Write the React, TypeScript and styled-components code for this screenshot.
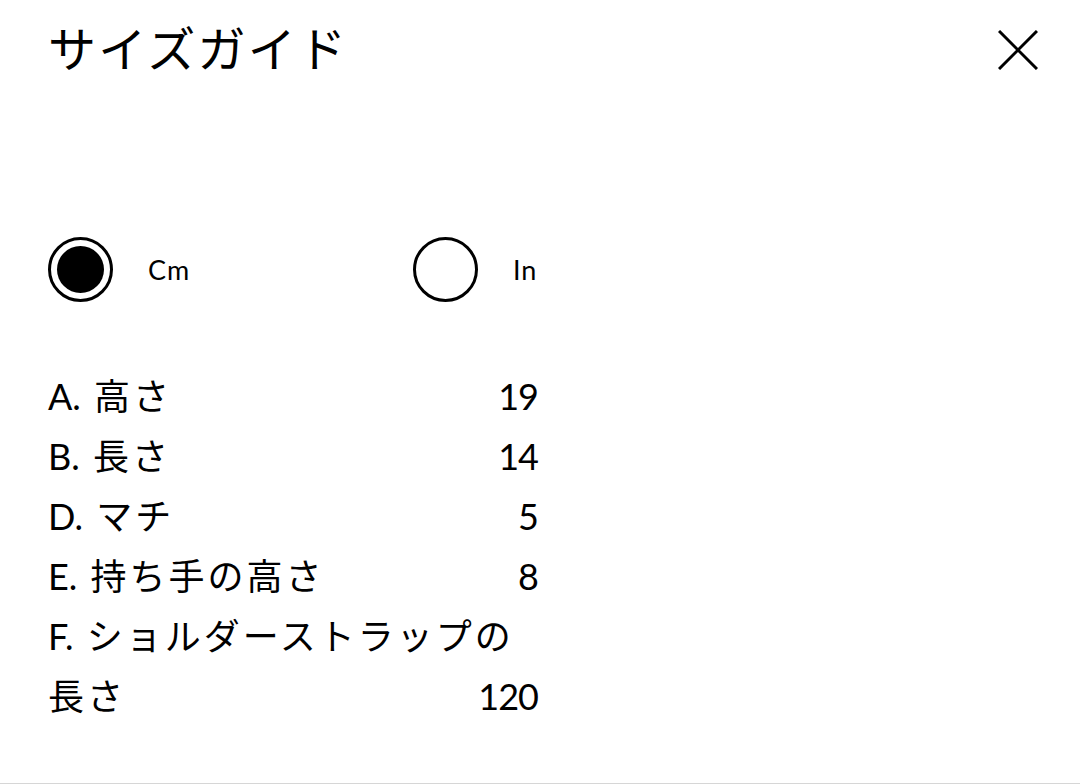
import React, { useState } from 'react';
import styled, { createGlobalStyle } from 'styled-components';

type Unit = 'cm' | 'in';

interface SizeRow {
  code: string;
  name: string;
  cm: number;
}

const rows: SizeRow[] = [
  { code: 'A.', name: '高さ', cm: 19 },
  { code: 'B.', name: '長さ', cm: 14 },
  { code: 'D.', name: 'マチ', cm: 5 },
  { code: 'E.', name: '持ち手の高さ', cm: 8 },
  { code: 'F.', name: 'ショルダーストラップの長さ', cm: 120 },
];

const toUnit = (cm: number, unit: Unit) =>
  unit === 'cm' ? String(cm) : (cm / 2.54).toFixed(1);

const App: React.FC = () => {
  const [unit, setUnit] = useState<Unit>('cm');

  return (
    <>
      <GlobalStyle />
      <Sheet>
        <Header>
          <Title>サイズガイド</Title>
          <CloseButton aria-label="閉じる">
            <svg width="40" height="40" viewBox="0 0 40 40">
              <path d="M1 1 L39 39 M39 1 L1 39" stroke="#000" strokeWidth="3" />
            </svg>
          </CloseButton>
        </Header>

        <UnitGroup>
          <UnitOption onClick={() => setUnit('cm')}>
            <RadioMark $checked={unit === 'cm'} />
            <UnitLabel>Cm</UnitLabel>
          </UnitOption>
          <UnitOption onClick={() => setUnit('in')}>
            <RadioMark $checked={unit === 'in'} />
            <UnitLabel>In</UnitLabel>
          </UnitOption>
        </UnitGroup>

        <SizeList>
          {rows.map((row) => (
            <SizeItem key={row.code}>
              <SizeCode>{row.code}</SizeCode> <SizeName>{row.name}</SizeName>
              <SizeValue>{toUnit(row.cm, unit)}</SizeValue>
            </SizeItem>
          ))}
        </SizeList>
      </Sheet>
    </>
  );
};

export default App;

const GlobalStyle = createGlobalStyle`
  html, body {
    margin: 0;
    padding: 0;
    background: #fff;
  }
  body {
    font-family: Lato, "Noto Sans CJK JP", sans-serif;
    color: #000;
  }
`;

const Sheet = styled.div`
  box-sizing: border-box;
  width: 1080px;
  height: 784px;
  padding: 13px 42px 0 48px;
  border-bottom: 1px solid #d6d6d6;
  overflow: hidden;
`;

const Header = styled.header`
  display: flex;
  justify-content: space-between;
  align-items: flex-start;
`;

const Title = styled.h1`
  margin: 0;
  font-size: 48px;
  font-weight: 400;
  line-height: 72px;
  letter-spacing: 2.3px;
`;

const CloseButton = styled.button`
  display: flex;
  margin-top: 17px;
  padding: 0;
  border: none;
  background: none;
  cursor: pointer;
`;

const UnitGroup = styled.div`
  display: flex;
  margin-top: 152px;
`;

const UnitOption = styled.label`
  display: flex;
  align-items: center;
  width: 365px;
  cursor: pointer;
`;

const RadioMark = styled.span<{ $checked: boolean }>`
  box-sizing: border-box;
  display: flex;
  align-items: center;
  justify-content: center;
  width: 65px;
  height: 65px;
  border: 3.5px solid #000;
  border-radius: 50%;

  &::after {
    content: '';
    width: 47px;
    height: 47px;
    border-radius: 50%;
    background: ${(p) => (p.$checked ? '#000' : 'transparent')};
  }
`;

const UnitLabel = styled.span`
  margin-left: 35px;
  font-size: 27px;
  letter-spacing: 1px;
`;

const SizeList = styled.div`
  width: 490px;
  margin-top: 64px;
`;

const SizeItem = styled.div`
  font-size: 36px;
  line-height: 60px;

  &::after {
    content: '';
    display: block;
    clear: both;
  }
`;

const SizeCode = styled.span`
  margin-right: 4px;
  letter-spacing: 0;
`;

const SizeName = styled.span`
  letter-spacing: 3px;
`;

const SizeValue = styled.span`
  float: right;
  letter-spacing: -1px;
`;
